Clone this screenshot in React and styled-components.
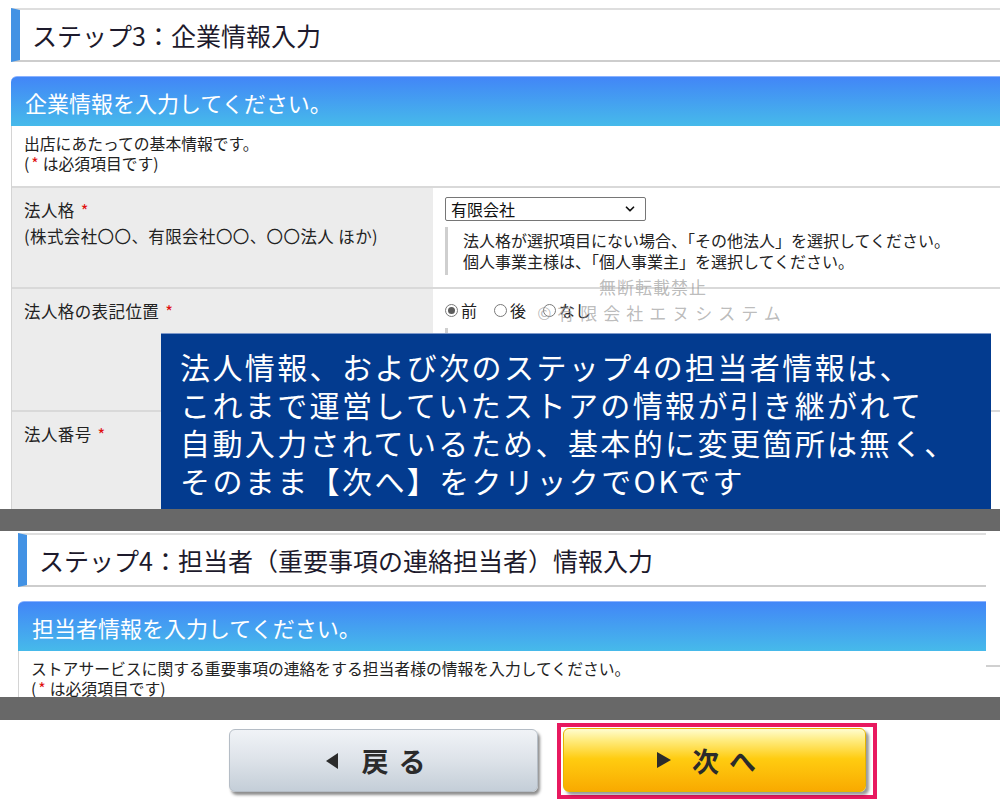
import styled, { createGlobalStyle } from "styled-components";
import { ChevronDown } from "lucide-react";

const GlobalStyle = createGlobalStyle`
  html, body { margin: 0; padding: 0; background: #fff; }
  body {
    font-family: "Noto Sans CJK JP", "Noto Sans", sans-serif;
    color: #222;
    width: 1000px;
    height: 803px;
    overflow: hidden;
  }
  * { box-sizing: border-box; }
`;

const Page = styled.main`
  display: flex;
  flex-direction: column;
  width: 1000px;
  height: 803px;
`;

const Shot = styled.section`
  position: relative;
  height: ${(p) => p.$h}px;
  overflow: hidden;
  padding: ${(p) => p.$top}px 0 0 ${(p) => p.$left}px;
  flex-shrink: 0;
`;

const Frame = styled.div`
  width: ${(p) => p.$w}px;
`;

const Divider = styled.div`
  height: ${(p) => p.$h}px;
  background: #686868;
  flex-shrink: 0;
`;

const StepHeading = styled.h2`
  margin: 0;
  height: 54px;
  display: flex;
  align-items: center;
  border-top: 2px solid #dedede;
  border-bottom: 2px solid #cdcdcd;
  border-left: 9px solid #4292e4;
  padding-left: 12px;
  font-size: 25px;
  font-weight: 400;
  color: #1d1a2c;
  white-space: nowrap;
`;

const SectionHeader = styled.div`
  margin-top: 14px;
  height: 50px;
  display: flex;
  align-items: center;
  padding-left: 14px;
  border-top: 1px solid #8ab2ff;
  border-top-left-radius: 6px;
  background: linear-gradient(#4286f7, #46baea);
  color: #fff;
  font-size: 22px;
  white-space: nowrap;
`;

const Table = styled.div`
  border-left: 1px solid #d4d4d4;
`;

const Intro = styled.div`
  padding: 8px 12px 12px;
  font-size: 15.8px;
  line-height: 20px;
  border-bottom: 2px solid #d9d9d9;
  white-space: nowrap;
`;

const Required = styled.span`
  color: #e01010;
  margin: 0 4px 0 ${(p) => (p.$gap ? 6 : 2)}px;
`;

const Row = styled.div`
  display: grid;
  grid-template-columns: 421px 1fr;
  height: ${(p) => p.$h}px;
  border-bottom: 2px solid #d9d9d9;
`;

const LabelCell = styled.div`
  background: #ececec;
  padding: 9px 12px;
  font-size: 16.5px;
  letter-spacing: 0.4px;
  line-height: 26px;
  white-space: nowrap;
`;

const ValueCell = styled.div`
  background: #fff;
  padding: ${(p) => p.$pt}px 12px 0;
  font-size: 16px;
`;

const SelectBox = styled.div`
  width: 201px;
  height: 24px;
  display: flex;
  align-items: center;
  justify-content: space-between;
  padding: 0 8px 0 5px;
  border: 1px solid #767676;
  border-radius: 2px;
  font-size: 16px;
  color: #111;
`;

const Note = styled.div`
  margin-top: ${(p) => p.$mt}px;
  border-left: 3px solid #cfcfcf;
  padding: 3px 0 3px 15px;
  line-height: 21px;
  font-size: 16px;
  white-space: nowrap;
`;

const RadioGroup = styled.div`
  display: flex;
  align-items: center;
  gap: 17px;
  height: 20px;
  font-size: 16px;
`;

const RadioOption = styled.label`
  display: inline-flex;
  align-items: center;
  gap: 3px;
`;

const RadioDot = styled.span`
  width: 13px;
  height: 13px;
  border-radius: 50%;
  border: 1px solid #7a7a7a;
  background: #fff;
  display: grid;
  place-items: center;
  &::after {
    content: "";
    width: 7px;
    height: 7px;
    border-radius: 50%;
    background: ${(p) => (p.$on ? "#5c5c5c" : "transparent")};
  }
`;

const Watermark = styled.div`
  position: absolute;
  left: 520px;
  top: 274px;
  width: 280px;
  text-align: center;
  color: rgba(150, 150, 150, 0.65);
  font-size: 17px;
  line-height: 26px;
  pointer-events: none;
`;

const WatermarkLine = styled.div`
  letter-spacing: ${(p) => p.$ls}px;
  margin-left: ${(p) => p.$shift}px;
  white-space: nowrap;
`;

const Callout = styled.div`
  position: absolute;
  left: 161px;
  top: 333px;
  width: 830px;
  height: 200px;
  background: #033b8f;
  border-top: 1px solid #7d98c9;
  padding: 13px 0 0 19px;
  color: #fff;
  font-size: 30px;
  line-height: 38px;
  letter-spacing: 2.4px;
  white-space: nowrap;
`;

const ButtonBar = styled.div`
  flex: 1;
  display: flex;
  align-items: flex-start;
  gap: 19px;
  padding: 3px 0 0 229px;
`;

const BaseButton = styled.button`
  display: flex;
  align-items: center;
  justify-content: center;
  padding: 0 16px 0 0;
  border-radius: 6px;
  font-family: inherit;
  font-size: 27px;
  font-weight: 700;
  color: #2b2b2b;
  cursor: pointer;
`;

const BackButton = styled(BaseButton)`
  margin-top: 6px;
  width: 309px;
  height: 63px;
  border: 1px solid #b5bdc6;
  background: linear-gradient(#f0f3f7, #dfe4ea 45%, #c4ced8);
  box-shadow: 2px 3px 3px rgba(0, 0, 0, 0.45);
`;

const Highlight = styled.div`
  width: 320px;
  height: 76px;
  border: 4px solid #e8195f;
  padding: 1px 0 0 2px;
`;

const NextButton = styled(BaseButton)`
  width: 303px;
  height: 64px;
  border: 1px solid #e6b400;
  background: linear-gradient(#fffdd0, #ffec80 18%, #ffcc10 48%, #f9aa00);
  box-shadow: 3px 3px 3px rgba(0, 0, 0, 0.4);
`;

const Arrow = styled.span`
  width: 0;
  height: 0;
  border-top: 8px solid transparent;
  border-bottom: 8px solid transparent;
  ${(p) =>
    p.$dir === "left"
      ? "border-right: 12px solid #2b2b2b;"
      : "border-left: 14px solid #2b2b2b;"}
  margin-right: ${(p) => (p.$dir === "left" ? 24 : 21)}px;
`;

const ButtonText = styled.span`
  display: flex;
  gap: 10px;
`;

const SideRule = styled.div`
  position: absolute;
  right: 0;
  top: 134px;
  width: 14px;
  border-top: 2px solid #d0d0d0;
`;

export default function App() {
  return (
    <Page>
      <GlobalStyle />
      <Shot $h={509} $top={8} $left={11}>
        <Frame $w={1010}>
          <StepHeading>ステップ3：企業情報入力</StepHeading>
          <SectionHeader>企業情報を入力してください。</SectionHeader>
          <Table>
            <Intro>
              出店にあたっての基本情報です。
              <br />(<Required>*</Required>は必須項目です)
            </Intro>
            <Row $h={101}>
              <LabelCell>
                法人格<Required $gap>*</Required>
                <br />
                (株式会社〇〇、有限会社〇〇、〇〇法人 ほか)
              </LabelCell>
              <ValueCell $pt={9}>
                <SelectBox>
                  有限会社
                  <ChevronDown size={14} strokeWidth={3} color="#111" />
                </SelectBox>
                <Note $mt={6}>
                  法人格が選択項目にない場合、「その他法人」を選択してください。
                  <br />
                  個人事業主様は、「個人事業主」を選択してください。
                </Note>
              </ValueCell>
            </Row>
            <Row $h={123}>
              <LabelCell>
                法人格の表記位置<Required $gap>*</Required>
              </LabelCell>
              <ValueCell $pt={11}>
                <RadioGroup>
                  <RadioOption>
                    <RadioDot $on />前
                  </RadioOption>
                  <RadioOption>
                    <RadioDot />後
                  </RadioOption>
                  <RadioOption>
                    <RadioDot />なし
                  </RadioOption>
                </RadioGroup>
                <Note $mt={8}>法人格の位置を選択してください。</Note>
              </ValueCell>
            </Row>
            <Row $h={140}>
              <LabelCell>
                法人番号<Required $gap>*</Required>
              </LabelCell>
              <ValueCell $pt={10} />
            </Row>
          </Table>
        </Frame>
        <Watermark>
          <WatermarkLine $ls={1} $shift={-14}>無断転載禁止</WatermarkLine>
          <WatermarkLine $ls={6} $shift={4}>©有限会社エヌシステム</WatermarkLine>
        </Watermark>
        <Callout>
          法人情報、および次のステップ4の担当者情報は、
          <br />
          これまで運営していたストアの情報が引き継がれて
          <br />
          自動入力されているため、基本的に変更箇所は無く、
          <br />
          そのまま【次へ】をクリックでOKです
        </Callout>
      </Shot>
      <Divider $h={22} />
      <Shot $h={166} $top={2} $left={18}>
        <Frame $w={968}>
          <StepHeading>ステップ4：担当者（重要事項の連絡担当者）情報入力</StepHeading>
          <SectionHeader>担当者情報を入力してください。</SectionHeader>
          <Table>
            <Intro>
              ストアサービスに関する重要事項の連絡をする担当者様の情報を入力してください。
              <br />(<Required>*</Required>は必須項目です)
            </Intro>
          </Table>
        </Frame>
        <SideRule />
      </Shot>
      <Divider $h={23} />
      <ButtonBar>
        <BackButton type="button">
          <Arrow $dir="left" />
          <ButtonText>
            <span>戻</span>
            <span>る</span>
          </ButtonText>
        </BackButton>
        <Highlight>
          <NextButton type="button">
            <Arrow $dir="right" />
            <ButtonText>
              <span>次</span>
              <span>へ</span>
            </ButtonText>
          </NextButton>
        </Highlight>
      </ButtonBar>
    </Page>
  );
}
